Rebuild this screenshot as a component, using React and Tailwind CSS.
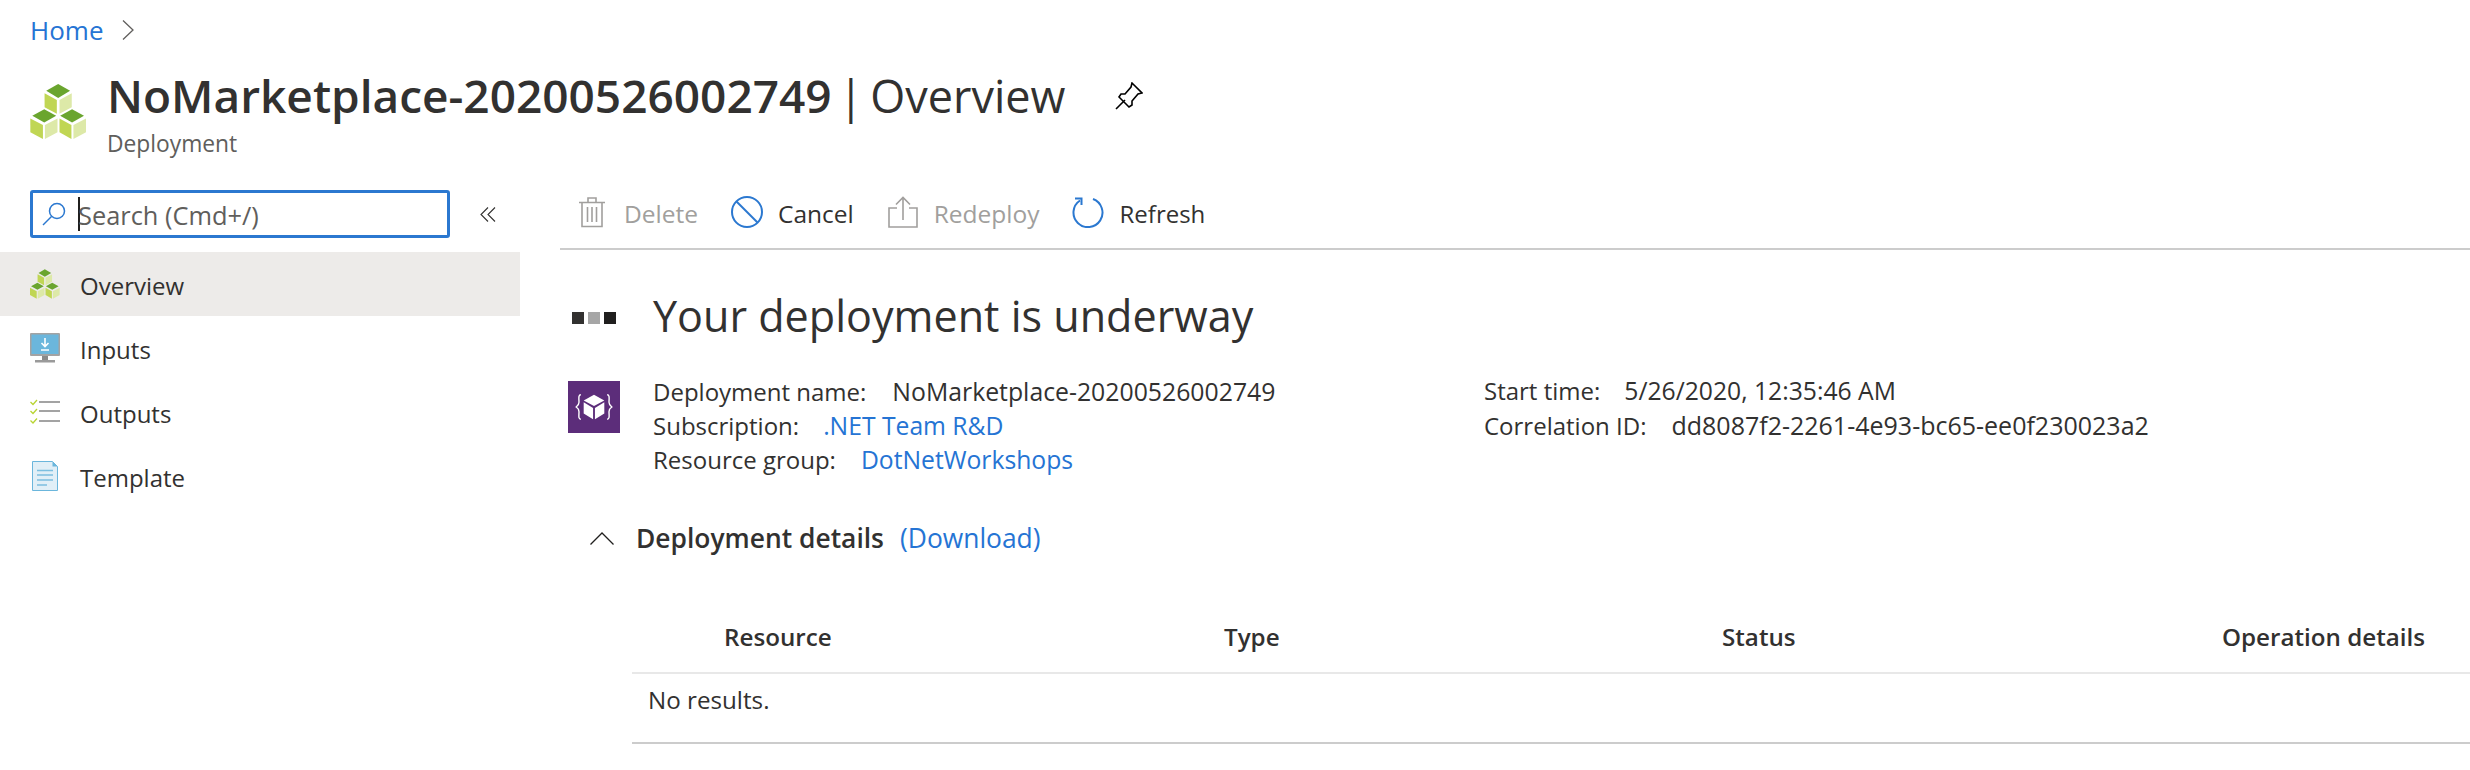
const Cubes = ({ className }) => (
    <svg viewBox="0 0 170 166" className={className}>
        <polygon points="84,0 120,20 84,42 48,20" fill="#6aa52e" />
        <polygon points="43,28 80,48 80,90 43,70" fill="#c0d654" />
        <polygon points="88,48 125,28 125,70 88,90" fill="#dde9a8" />
        <polygon points="42,76 78,96 42,116 6,96" fill="#6aa52e" />
        <polygon points="0,104 38,124 38,166 0,146" fill="#c0d654" />
        <polygon points="44,124 82,104 82,146 44,166" fill="#dde9a8" />
        <polygon points="126,76 162,96 126,116 90,96" fill="#6aa52e" />
        <polygon points="88,104 124,124 124,166 88,146" fill="#c0d654" />
        <polygon points="130,124 168,104 168,146 130,166" fill="#dde9a8" />
    </svg>
);

const Monitor = ({ className }) => (
    <svg viewBox="0 0 30 30" className={className}>
        <rect x="0" y="0" width="30" height="23" rx="1" fill="#a3a3a3" />
        <rect x="1.5" y="1.5" width="27" height="19.5" fill="#6bb6dc" />
        <rect x="12" y="23" width="6" height="4" fill="#8a8a8a" />
        <rect x="5" y="27" width="20" height="2.5" fill="#9a9a9a" />
        <path d="M15 5v8M11.5 10l3.5 3.5 3.5-3.5M11 17h8" stroke="#fff" strokeWidth="1.6" fill="none" />
    </svg>
);

const Outputs = ({ className }) => (
    <svg viewBox="0 0 30 26" className={className}>
        <path d="M0.5 3l2.5 2.5 4-4.5M0.5 12l2.5 2.5 4-4.5M0.5 21.500l2.500 2.500 4-4.500" stroke="#b8d432" strokeWidth="1.3" fill="none" />
        <path d="M9 3h21M9 12h21M9 22h21" stroke="#a3a3a3" strokeWidth="2.200" fill="none" />
    </svg>
);

const TemplateDoc = ({ className }) => (
    <svg viewBox="0 0 26 30" className={className}>
        <path d="M0.500 0.500h20l5 5v24h-25z" fill="#e1eff7" stroke="#6bb6dc" />
        <path d="M20.500 0.500v5h5z" fill="#6bb6dc" />
        <path d="M5 9.500h16M5 14h16M5 19h16M5 24h10" stroke="#7cbfe0" strokeWidth="1.500" fill="none" />
    </svg>
);

const NavItem = ({ icon, label, active }) => (
    <div className={active ? 'flex h-[64px] items-center bg-[#edebe9] pl-[30px]' : 'flex h-[64px] items-center pl-[30px]'}>
        <div className="flex w-[30px] justify-center">{icon}</div>
        <span className="ml-[20px] pt-[4px]">{label}</span>
    </div>
);

const App = () => {
    return (
        <div className="flex h-[770px] w-[2470px] flex-col overflow-hidden bg-white font-['Open_Sans',sans-serif] text-[24px] leading-[34px] text-[#323130]">
            <div className="flex h-[60px] items-center pl-[30px] text-[#2574d4]">
                <span className="text-[26px]">Home</span>
                <svg viewBox="0 0 12 20" className="ml-[19px] h-[20px] w-[12px]" fill="none" stroke="#605e5c" strokeWidth="1.300">
                    <path d="M1 0.500l10 9.500-10 9.500" />
                </svg>
            </div>

            <div className="flex h-[130px] pl-[30px]">
                <Cubes className="mt-[24px] h-[55px] w-[57px]" />
                <div className="ml-[20px] pt-[3px]">
                    <div className="flex items-center">
                        <h1 className="text-[45px] leading-[64px] whitespace-nowrap">
                            <span className="text-[46px] font-semibold">NoMarketplace-20200526002749</span>
                            <span className="ml-[7px]">|</span>
                            <span className="ml-[7px]">Overview</span>
                        </h1>
                        <svg viewBox="0 0 28 28" className="ml-[50px] h-[28px] w-[28px]" fill="none" stroke="#000" strokeWidth="1.600">
                            <path d="M1 27l9-9M17 1l10 10-4 1-6 7 0 4-3 2-10-10 2-3 4 0 6-7z" fill="#fff" />
                        </svg>
                    </div>
                    <div className="pt-[1px] text-[22.800px] leading-[30px] text-[#605e5c]">Deployment</div>
                </div>
            </div>

            <div className="flex flex-1">
                <aside className="w-[520px] shrink-0">
                    <div className="mb-[14px] flex h-[48px] items-center pl-[30px]">
                        <div className="flex h-[48px] w-[420px] items-center rounded-[3px] border-[3px] border-[#2b78d0] pl-[9px]">
                            <svg viewBox="0 0 24 24" className="h-[24px] w-[24px]" fill="none" stroke="#2b78d0" strokeWidth="1.500">
                                <circle cx="15" cy="9" r="7.500" />
                                <path d="M9.500 14.500L1 23" />
                            </svg>
                            <span className="ml-[12px] h-[34px] w-[2px] bg-[#201f1e]"></span>
                            <span className="-ml-[2px] pt-[1px] text-[25.400px] text-[#605e5c]">Search (Cmd+/)</span>
                        </div>
                        <svg viewBox="0 0 16 15" className="ml-[30px] h-[15px] w-[16px]" fill="none" stroke="#323130" strokeWidth="1.100">
                            <path d="M8 0.500L1 7.500l7 7M15 0.500l-7 7 7 7" />
                        </svg>
                    </div>
                    <NavItem active label="Overview" icon={<Cubes className="h-[30px] w-[30px]" />} />
                    <NavItem label="Inputs" icon={<Monitor className="h-[30px] w-[30px]" />} />
                    <NavItem label="Outputs" icon={<Outputs className="h-[26px] w-[30px]" />} />
                    <NavItem label="Template" icon={<TemplateDoc className="h-[30px] w-[26px]" />} />
                </aside>

                <main className="ml-[40px] min-w-0 flex-1">
                    <div className="flex h-[60px] items-start border-b-2 border-[#cccccc] pt-[6px] pl-[19px] text-[24.500px]">
                        <div className="flex h-[32px] items-center text-[#a19f9d]">
                            <svg viewBox="0 0 26 32" className="h-[32px] w-[26px]" fill="none" stroke="#a19f9d" strokeWidth="1.600">
                                <path d="M3 7v23.500h20V7M0 6.500h26M9 6V2h8v4M8.500 11v15M13 11v15M17.500 11v15" />
                            </svg>
                            <span className="ml-[19px] pt-[3px]">Delete</span>
                        </div>
                        <div className="ml-[33px] flex h-[32px] items-center">
                            <svg viewBox="0 0 32 32" className="h-[32px] w-[32px]" fill="none" stroke="#2b78d0" strokeWidth="2">
                                <circle cx="16" cy="16" r="15" />
                                <path d="M5.500 5.500l21 21" />
                            </svg>
                            <span className="ml-[15px] pt-[3px]">Cancel</span>
                        </div>
                        <div className="ml-[34px] flex h-[32px] items-center text-[#a19f9d]">
                            <svg viewBox="0 0 30 32" className="h-[32px] w-[30px]" fill="none" stroke="#a19f9d" strokeWidth="1.600">
                                <path d="M15 24V1.500M8 8.500l7-7 7 7M9 12H1v19h28V12h-8" />
                            </svg>
                            <span className="ml-[16px] pt-[3px]">Redeploy</span>
                        </div>
                        <div className="ml-[32px] flex h-[32px] items-center">
                            <svg viewBox="0 0 32 32" className="h-[32px] w-[32px]" fill="none" stroke="#2b78d0" strokeWidth="2">
                                <path d="M21 3a14.500 14.500 0 1 1-13 1.500" />
                                <path d="M3 2.500h6.500V9" />
                            </svg>
                            <span className="ml-[16px] pt-[3px] text-[24px]">Refresh</span>
                        </div>
                    </div>

                    <div className="mt-[38px] flex items-center pl-[12px]">
                        <div className="mt-[4px] flex w-[44px] gap-[4px]">
                            <span className="h-[12px] w-[12px] bg-[#323130]"></span>
                            <span className="h-[12px] w-[12px] bg-[#a6a6a6]"></span>
                            <span className="h-[12px] w-[12px] bg-[#201f1e]"></span>
                        </div>
                        <h2 className="ml-[37px] text-[43.100px] leading-[56px]">Your deployment is underway</h2>
                    </div>

                    <div className="mt-[30px] flex">
                        <div className="ml-[8px] mt-[7px] flex h-[52px] w-[52px] items-center justify-center bg-[#5c2d7a]">
                            <svg viewBox="0 0 40 32" className="h-[30px] w-[38px]" fill="none" stroke="#fff" strokeWidth="1.500">
                                <path d="M6 3C3 3 4 7 4 11c0 3-3 5-3 5s3 2 3 5c0 4-1 8 2 8M34 3c3 0 2 4 2 8 0 3 3 5 3 5s-3 2-3 5c0 4 1 8-2 8" />
                                <polygon points="20,3 31,9 20,15 9,9" fill="#fff" stroke="none" />
                                <polygon points="9,11 19,17 19,29 9,23" fill="#fff" stroke="none" />
                                <polygon points="21,17 31,11 31,23 21,29" fill="#fff" stroke="none" />
                            </svg>
                        </div>
                        <div className="ml-[33px] w-[831px] shrink-0">
                            <div>
                                Deployment name:<span className="ml-[26px] text-[24.800px]">NoMarketplace-20200526002749</span>
                            </div>
                            <div>
                                Subscription:<span className="ml-[24px] text-[24.700px] text-[#2574d4]">.NET Team R&amp;D</span>
                            </div>
                            <div>
                                Resource group:<span className="ml-[25px] text-[24.700px] text-[#2574d4]">DotNetWorkshops</span>
                            </div>
                        </div>
                        <div>
                            <div>
                                Start time:<span className="ml-[24px] text-[24.700px]">5/26/2020, 12:35:46 AM</span>
                            </div>
                            <div>
                                Correlation ID:<span className="ml-[25px] text-[25px]">dd8087f2-2261-4e93-bc65-ee0f230023a2</span>
                            </div>
                        </div>
                    </div>

                    <div className="mt-[41px] flex h-[40px] items-center pl-[30px]">
                        <svg viewBox="0 0 24 13" className="h-[13px] w-[24px]" fill="none" stroke="#201f1e" strokeWidth="1.300">
                            <path d="M0.500 12.500L12 1l11.500 11.500" />
                        </svg>
                        <span className="ml-[22px] text-[26.400px] font-semibold">Deployment details</span>
                        <span className="ml-[16px] text-[26.400px] text-[#2574d4]">(Download)</span>
                    </div>

                    <div className="mt-[42px] ml-[72px]">
                        <div className="grid h-[74px] grid-cols-[592px_498px_500px_1fr] items-center border-b-2 border-[#e8e8e8] pt-[2px] text-[24.200px] font-semibold">
                            <div className="pl-[92px]">Resource</div>
                            <div>Type</div>
                            <div>Status</div>
                            <div>Operation details</div>
                        </div>
                        <div className="h-[70px] border-b-2 border-[#cccccc] pt-[9px] pl-[16px] text-[24.200px]">No results.</div>
                    </div>
                </main>
            </div>
        </div>
    );
};

export default App;
